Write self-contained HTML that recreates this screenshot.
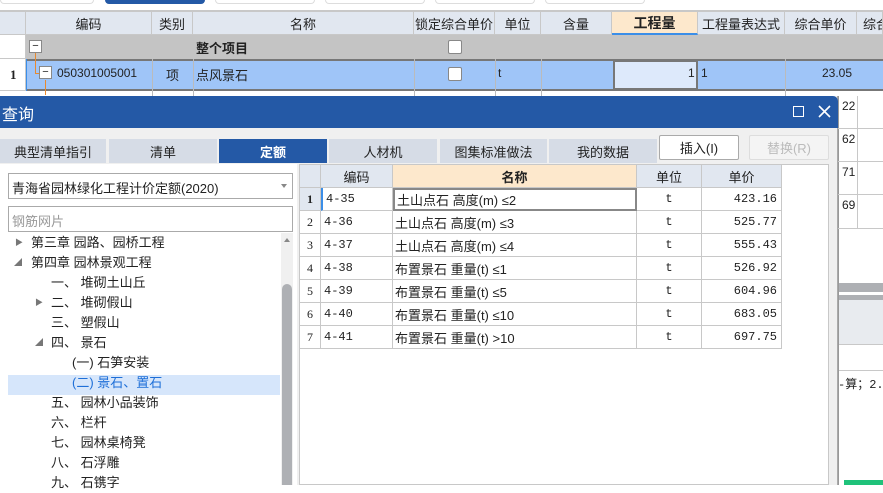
<!DOCTYPE html>
<html><head><meta charset="utf-8"><style>
*{box-sizing:border-box;margin:0;padding:0}
body{width:883px;height:485px;overflow:hidden;background:#fff;font-family:"Liberation Sans","Noto Sans CJK SC",sans-serif;font-size:12px;color:#222;position:relative}
.a{position:absolute}
.c{position:absolute;border-right:1px solid #c8c8c8;border-bottom:1px solid #c8c8c8;display:flex;align-items:center;white-space:nowrap;overflow:hidden}
.ctr{justify-content:center}
.r{justify-content:flex-end;padding-right:4px}
.mono{font-family:"Liberation Mono","Noto Sans CJK SC",monospace;font-size:12px}
.cb{width:14px;height:14px;border:1px solid #888;background:#fff;border-radius:2px}
.tab{position:absolute;top:139px;height:24px;background:#d6dce6;display:flex;align-items:center;justify-content:center;font-size:13px}
</style></head><body>
<!-- top pills -->
<div class="a" style="left:0;top:0;width:94px;height:4px;border:1px solid #ddd;border-top:none;border-radius:0 0 6px 6px"></div>
<div class="a" style="left:105px;top:0;width:100px;height:4px;background:#2459a6;border-radius:0 0 6px 6px"></div>
<div class="a" style="left:215px;top:0;width:100px;height:4px;border:1px solid #ddd;border-top:none;border-radius:0 0 6px 6px"></div>
<div class="a" style="left:325px;top:0;width:100px;height:4px;border:1px solid #ddd;border-top:none;border-radius:0 0 6px 6px"></div>
<div class="a" style="left:435px;top:0;width:100px;height:4px;border:1px solid #ddd;border-top:none;border-radius:0 0 6px 6px"></div>
<div class="a" style="left:545px;top:0;width:100px;height:4px;border:1px solid #ddd;border-top:none;border-radius:0 0 6px 6px"></div>
<div class="a" style="left:0;top:10px;width:883px;height:2px;background:#c8c8c8"></div>
<!-- header -->
<div class="a" style="left:0;top:12px;width:883px;height:23px;background:#e1e7f0"></div>
<div class="c" style="left:0;top:12px;width:26px;height:23px;background:#e1e7f0"></div>
<div class="c ctr" style="left:26px;top:12px;width:126px;height:23px;font-size:13px">编码</div>
<div class="c ctr" style="left:152px;top:12px;width:41px;height:23px;font-size:13px">类别</div>
<div class="c ctr" style="left:193px;top:12px;width:221px;height:23px;font-size:13px">名称</div>
<div class="c ctr" style="left:414px;top:12px;width:81px;height:23px;font-size:13px">锁定综合单价</div>
<div class="c ctr" style="left:495px;top:12px;width:46px;height:23px;font-size:13px">单位</div>
<div class="c ctr" style="left:541px;top:12px;width:71px;height:23px;font-size:13px">含量</div>
<div class="c ctr" style="left:612px;top:12px;width:86px;height:23px;font-size:14px;font-weight:bold;background:#fde8cc;border-bottom:2px solid #3b8ee8">工程量</div>
<div class="c ctr" style="left:698px;top:12px;width:87px;height:23px;font-size:13px">工程量表达式</div>
<div class="c ctr" style="left:785px;top:12px;width:72px;height:23px;font-size:13px">综合单价</div>
<div class="c" style="left:857px;top:12px;width:26px;height:23px;font-size:13px;padding-left:6px">综合</div>
<!-- group row -->
<div class="a" style="left:26px;top:35px;width:857px;height:24px;background:#c4c4c4"></div>
<div class="c" style="left:0;top:35px;width:26px;height:24px"></div>
<div class="a cb" style="left:29px;top:40px;width:13px;height:13px;border-radius:0;font-size:11px;line-height:10px;text-align:center">−</div>
<div class="a" style="left:196px;top:38px;font-weight:bold;font-size:13px">整个项目</div>
<div class="a cb" style="left:448px;top:40px"></div>
<!-- row 1 -->
<div class="a" style="left:26px;top:59px;width:857px;height:32px;background:#9fc5f8;border-top:2px solid #777;border-bottom:2px solid #777"></div>
<div class="a" style="left:25px;top:59px;width:2px;height:32px;background:#3b8ee8"></div>
<div class="c" style="left:0;top:59px;width:26px;height:32px;font-weight:bold;font-family:'Liberation Serif',serif;padding-left:10px;font-size:13px">1</div>
<div class="a" style="left:35px;top:53px;width:1px;height:21px;background:#e88a30"></div>
<div class="a" style="left:35px;top:73px;width:6px;height:1px;background:#e88a30"></div>
<div class="a" style="left:45px;top:80px;width:1px;height:15px;background:#e88a30"></div>
<div class="a cb" style="left:39px;top:66px;width:13px;height:13px;border-radius:0;font-size:11px;line-height:10px;text-align:center">−</div>
<div class="a" style="left:57px;top:66px;font-size:12px">050301005001</div>
<div class="a" style="left:166px;top:65px;font-size:13px">项</div>
<div class="a" style="left:196px;top:65px;font-size:13px">点风景石</div>
<div class="a cb" style="left:448px;top:67px"></div>
<div class="a" style="left:498px;top:66px">t</div>
<div class="a" style="left:613px;top:60px;width:85px;height:30px;background:#dde9fb;border:2px solid #777"></div>
<div class="a" style="left:688px;top:66px">1</div>
<div class="a" style="left:701px;top:66px">1</div>
<div class="a" style="left:822px;top:66px">23.05</div>
<div class="a" style="left:193px;top:59px;width:1px;height:37px;background:#bbb"></div>
<div class="a" style="left:152px;top:59px;width:1px;height:37px;background:#bbb"></div>
<div class="a" style="left:414px;top:59px;width:1px;height:37px;background:#bbb"></div>
<div class="a" style="left:495px;top:59px;width:1px;height:37px;background:#bbb"></div>
<div class="a" style="left:541px;top:59px;width:1px;height:37px;background:#bbb"></div>
<div class="a" style="left:785px;top:59px;width:1px;height:37px;background:#bbb"></div>
<!-- right background area -->
<div class="a" style="left:838px;top:96px;width:45px;height:389px;background:#fff"></div>
<div class="a" style="left:838px;top:96px;width:1px;height:389px;background:#999"></div>
<div class="a" style="left:857px;top:96px;width:1px;height:133px;background:#c8c8c8"></div>
<div class="a" style="left:842px;top:99px">22</div>
<div class="a" style="left:838px;top:128px;width:45px;height:1px;background:#c8c8c8"></div>
<div class="a" style="left:842px;top:132px">62</div>
<div class="a" style="left:838px;top:161px;width:45px;height:1px;background:#c8c8c8"></div>
<div class="a" style="left:842px;top:165px">71</div>
<div class="a" style="left:838px;top:194px;width:45px;height:1px;background:#c8c8c8"></div>
<div class="a" style="left:842px;top:198px">69</div>
<div class="a" style="left:838px;top:228px;width:45px;height:1px;background:#c8c8c8"></div>
<div class="a" style="left:839px;top:283px;width:44px;height:9px;background:#aeb0b4"></div>
<div class="a" style="left:839px;top:295px;width:44px;height:5px;background:#aeb0b4"></div>
<div class="a" style="left:839px;top:300px;width:44px;height:45px;background:#e8ebef;border-bottom:1px solid #c8c8c8"></div>
<div class="a" style="left:839px;top:370px;width:44px;height:1px;background:#c8c8c8"></div>
<div class="a mono" style="left:838px;top:375px;white-space:nowrap">-算；2.以</div>
<div class="a" style="left:844px;top:480px;width:39px;height:5px;background:#1fc27a"></div>
<!-- dialog -->
<div class="a" style="left:0;top:96px;width:838px;height:389px;background:#f0f0f0;border-right:1px solid #aaa"></div>
<div class="a" style="left:0;top:96px;width:838px;height:32px;background:#2459a6;border-radius:0 5px 0 0"></div>
<div class="a" style="left:2px;top:101px;color:#fff;font-size:16px">查询</div>
<div class="a" style="left:793px;top:106px;width:11px;height:11px;border:1.5px solid #fff"></div>
<svg class="a" style="left:818px;top:105px" width="13" height="13"><path d="M1 1L12 12M12 1L1 12" stroke="#fff" stroke-width="1.6"/></svg>
<div class="tab" style="left:0;width:106px">典型清单指引</div>
<div class="tab" style="left:109px;width:108px">清单</div>
<div class="tab" style="left:219px;width:108px;background:#2459a6;color:#fff;font-weight:bold">定额</div>
<div class="tab" style="left:329px;width:108px">人材机</div>
<div class="tab" style="left:440px;width:107px">图集标准做法</div>
<div class="tab" style="left:549px;width:108px">我的数据</div>
<div class="a" style="left:659px;top:135px;width:80px;height:25px;background:#fff;border:1px solid #aaa;border-radius:2px;display:flex;align-items:center;justify-content:center;font-size:13px">插入(I)</div>
<div class="a" style="left:749px;top:135px;width:80px;height:25px;background:#f4f4f4;border:1px solid #ddd;border-radius:2px;display:flex;align-items:center;justify-content:center;font-size:13px;color:#bbb">替换(R)</div>
<!-- left panel -->
<div class="a" style="left:0;top:164px;width:297px;height:321px;background:#fff"></div>
<div class="a" style="left:8px;top:173px;width:285px;height:26px;border:1px solid #aaa;background:#fff;padding:4px 3px;font-size:13px">青海省园林绿化工程计价定额(2020)</div>
<div class="a" style="left:281px;top:184px;width:0;height:0;border-left:3px solid transparent;border-right:3px solid transparent;border-top:4px solid #888"></div>
<div class="a" style="left:8px;top:206px;width:285px;height:26px;border:1px solid #aaa;padding:4px 3px;font-size:13px;color:#999">钢筋网片</div>
<div class="a" style="left:281px;top:233px;width:12px;height:252px;background:#f0f0f0"></div>
<div class="a" style="left:282px;top:284px;width:10px;height:201px;background:#aeb0b4;border-radius:5px 5px 0 0"></div>
<div class="a" style="left:284px;top:238px;width:0;height:0;border-left:3px solid transparent;border-right:3px solid transparent;border-bottom:4px solid #888"></div>
<div class="a" style="left:8px;top:375px;width:272px;height:20px;background:#d6e6fb"></div>
<div class="a" style="font-size:13px;left:0;top:233px;width:280px;line-height:20px">
<div style="position:absolute;top:0;left:15px;color:#777;font-size:8px">▶</div><div style="position:absolute;top:0;left:31px">第三章 园路、园桥工程</div>
<div style="position:absolute;top:20px;left:14px;color:#777;font-size:8px">◢</div><div style="position:absolute;top:20px;left:31px">第四章 园林景观工程</div>
<div style="position:absolute;top:40px;left:51px">一、 堆砌土山丘</div>
<div style="position:absolute;top:60px;left:35px;color:#777;font-size:8px">▶</div><div style="position:absolute;top:60px;left:51px">二、 堆砌假山</div>
<div style="position:absolute;top:80px;left:51px">三、 塑假山</div>
<div style="position:absolute;top:100px;left:35px;color:#777;font-size:8px">◢</div><div style="position:absolute;top:100px;left:51px">四、 景石</div>
<div style="position:absolute;top:120px;left:72px">(一) 石笋安装</div>
<div style="position:absolute;top:140px;left:72px;color:#1e6fd8">(二) 景石、置石</div>
<div style="position:absolute;top:160px;left:51px">五、 园林小品装饰</div>
<div style="position:absolute;top:180px;left:51px">六、 栏杆</div>
<div style="position:absolute;top:200px;left:51px">七、 园林桌椅凳</div>
<div style="position:absolute;top:220px;left:51px">八、 石浮雕</div>
<div style="position:absolute;top:240px;left:51px">九、 石镌字</div>
</div>
<!-- right panel table -->
<div class="a" style="left:299px;top:164px;width:530px;height:321px;background:#fff;border:1px solid #c8c8c8"></div>
<div class="c" style="left:300px;top:165px;width:21px;height:23px;background:#e1e7f0"></div>
<div class="c ctr" style="left:321px;top:165px;width:72px;height:23px;background:#e1e7f0;font-size:13px">编码</div>
<div class="c ctr" style="left:393px;top:165px;width:244px;height:23px;background:#fde8cc;font-size:13px;font-weight:bold">名称</div>
<div class="c ctr" style="left:637px;top:165px;width:65px;height:23px;background:#e1e7f0;font-size:13px">单位</div>
<div class="c ctr" style="left:702px;top:165px;width:80px;height:23px;background:#e1e7f0;font-size:13px">单价</div>
<div id="rows"></div>
<div class="c ctr" style="left:300px;top:188px;width:21px;height:23px;background:#e1e7f0;font-weight:bold;font-family:'Liberation Serif',serif">1</div>
<div class="c mono" style="left:321px;top:188px;width:72px;height:23px;padding-left:3px;border-left:2px solid #3b8ee8">4-35</div>
<div class="c" style="left:393px;top:188px;width:244px;height:23px;padding-left:2px;font-size:13px;border:2px solid #888">土山点石 高度(m) ≤2</div>
<div class="c ctr mono" style="left:637px;top:188px;width:65px;height:23px">t</div>
<div class="c r mono" style="left:702px;top:188px;width:80px;height:23px">423.16</div>

<div class="c ctr" style="left:300px;top:211px;width:21px;height:23px;font-family:'Liberation Serif',serif">2</div>
<div class="c mono" style="left:321px;top:211px;width:72px;height:23px;padding-left:3px">4-36</div>
<div class="c" style="left:393px;top:211px;width:244px;height:23px;padding-left:2px;font-size:13px">土山点石 高度(m) ≤3</div>
<div class="c ctr mono" style="left:637px;top:211px;width:65px;height:23px">t</div>
<div class="c r mono" style="left:702px;top:211px;width:80px;height:23px">525.77</div>

<div class="c ctr" style="left:300px;top:234px;width:21px;height:23px;font-family:'Liberation Serif',serif">3</div>
<div class="c mono" style="left:321px;top:234px;width:72px;height:23px;padding-left:3px">4-37</div>
<div class="c" style="left:393px;top:234px;width:244px;height:23px;padding-left:2px;font-size:13px">土山点石 高度(m) ≤4</div>
<div class="c ctr mono" style="left:637px;top:234px;width:65px;height:23px">t</div>
<div class="c r mono" style="left:702px;top:234px;width:80px;height:23px">555.43</div>

<div class="c ctr" style="left:300px;top:257px;width:21px;height:23px;font-family:'Liberation Serif',serif">4</div>
<div class="c mono" style="left:321px;top:257px;width:72px;height:23px;padding-left:3px">4-38</div>
<div class="c" style="left:393px;top:257px;width:244px;height:23px;padding-left:2px;font-size:13px">布置景石 重量(t) ≤1</div>
<div class="c ctr mono" style="left:637px;top:257px;width:65px;height:23px">t</div>
<div class="c r mono" style="left:702px;top:257px;width:80px;height:23px">526.92</div>

<div class="c ctr" style="left:300px;top:280px;width:21px;height:23px;font-family:'Liberation Serif',serif">5</div>
<div class="c mono" style="left:321px;top:280px;width:72px;height:23px;padding-left:3px">4-39</div>
<div class="c" style="left:393px;top:280px;width:244px;height:23px;padding-left:2px;font-size:13px">布置景石 重量(t) ≤5</div>
<div class="c ctr mono" style="left:637px;top:280px;width:65px;height:23px">t</div>
<div class="c r mono" style="left:702px;top:280px;width:80px;height:23px">604.96</div>

<div class="c ctr" style="left:300px;top:303px;width:21px;height:23px;font-family:'Liberation Serif',serif">6</div>
<div class="c mono" style="left:321px;top:303px;width:72px;height:23px;padding-left:3px">4-40</div>
<div class="c" style="left:393px;top:303px;width:244px;height:23px;padding-left:2px;font-size:13px">布置景石 重量(t) ≤10</div>
<div class="c ctr mono" style="left:637px;top:303px;width:65px;height:23px">t</div>
<div class="c r mono" style="left:702px;top:303px;width:80px;height:23px">683.05</div>

<div class="c ctr" style="left:300px;top:326px;width:21px;height:23px;font-family:'Liberation Serif',serif">7</div>
<div class="c mono" style="left:321px;top:326px;width:72px;height:23px;padding-left:3px">4-41</div>
<div class="c" style="left:393px;top:326px;width:244px;height:23px;padding-left:2px;font-size:13px">布置景石 重量(t) &gt;10</div>
<div class="c ctr mono" style="left:637px;top:326px;width:65px;height:23px">t</div>
<div class="c r mono" style="left:702px;top:326px;width:80px;height:23px">697.75</div>
</body></html>
